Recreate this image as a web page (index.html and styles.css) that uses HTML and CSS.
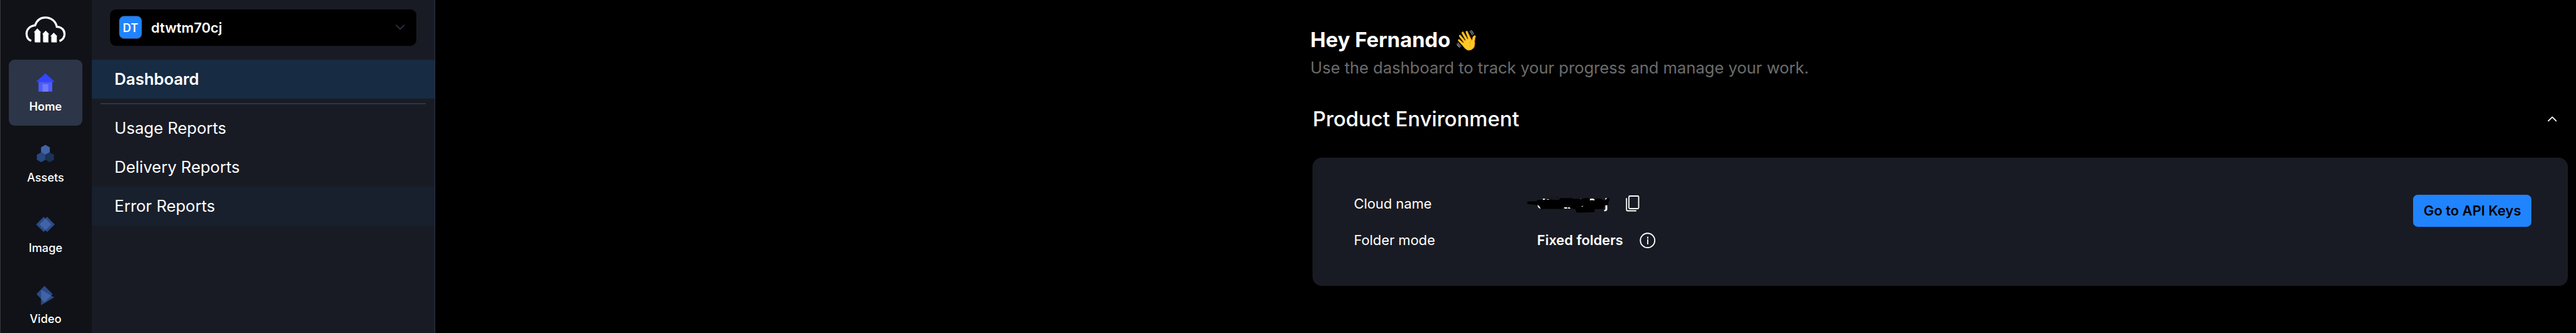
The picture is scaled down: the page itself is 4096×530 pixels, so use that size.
FILE: index.html
```
<!DOCTYPE html>
<html lang="en">
<head>
<meta charset="utf-8">
<title>Dashboard</title>
<link rel="stylesheet" href="styles.css">
</head>
<body>
<div class="app">
  <nav class="rail">
    <svg class="logo" viewBox="0 0 240 180">
      <path d="M45 155C29 149 20.500 135 20.500 118C20.500 94 39 76 65 74C74 48 94 32.500 119 32.500C148 32.500 173 51 179 81C203 81 219.500 98 219.500 119C219.500 136 211 149 193 156" fill="none" stroke="#fff" stroke-width="11"/>
      <path d="M77 90L97 110H93V163H68Q63 163 63 158V110H58ZM121 101L140 120H135V163H112Q107 163 107 158V120H102ZM163 112L182 131H179V163H155Q150 163 150 158V131H145Z" fill="#fff"/>
    </svg>
    <a class="rail-item rail-item--active">
      <svg viewBox="0 0 120 120"><path fill="#4e5bff" d="M24 57h72v51H24z"/><path fill="#3346ff" d="M10 57 60 12l49 45z"/><path fill="#717bff" d="M45 69h30v39H45z"/></svg>
      <span>Home</span>
    </a>
    <a class="rail-item">
      <svg viewBox="0 0 120 120"><path fill="#4163a8" d="m60 15 23 13v26L60 67 37 54V28z"/><path fill="#284780" d="m38 54 22 13v26l-22 13-23-13V67z"/><path fill="#1b3155" d="m82 54 23 13v26l-23 13-22-13V67z"/></svg>
      <span>Assets</span>
    </a>
    <a class="rail-item">
      <svg viewBox="0 0 120 120"><path fill="#2c4a85" d="m11 60 40-40 40 40-40 40z"/><path fill="#2c4a85" d="m29 60 40-40 40 40-40 40z"/><path fill="#4163a8" d="m29 60 31-31 31 31-31 31z"/></svg>
      <span>Image</span>
    </a>
    <a class="rail-item">
      <svg viewBox="0 0 120 120"><clipPath id="play"><path d="m37 30 69 40-69 41z"/></clipPath><path fill="#2c4a85" d="m13 53 42-43 43 43-43 43z"/><path fill="#2c4a85" d="m37 30 69 40-69 41z"/><path fill="#4163a8" clip-path="url(#play)" d="m13 53 42-43 43 43-43 43z"/></svg>
      <span>Video</span>
    </a>
  </nav>
  <aside class="side">
    <div class="picker">
      <span class="badge">DT</span>
      <span class="picker-name">dtwtm70cj</span>
      <svg class="chevron chevron--dim" viewBox="0 0 16 10"><path d="m1.200 1.200 6.800 6.800 6.800-6.800"/></svg>
    </div>
    <a class="side-link side-link--active">Dashboard</a>
    <hr class="rule">
    <a class="side-link">Usage Reports</a>
    <a class="side-link">Delivery Reports</a>
    <a class="side-link side-link--hover">Error Reports</a>
  </aside>
  <main class="main">
    <h1 class="hello">Hey Fernando<span class="wave">👋</span></h1>
    <p class="intro">Use the dashboard to track your progress and manage your work.</p>
    <section class="env">
      <header class="env-head">
        <h2>Product Environment</h2>
        <svg class="chevron" viewBox="0 0 16 10"><path d="m1.200 8.200 6.800-6.800 6.800 6.800"/></svg>
      </header>
      <div class="card">
        <dl class="facts">
          <div class="fact">
            <dt>Cloud name</dt>
            <dd>
              <span class="masked">dtwtm70cj
                <svg class="scribble" viewBox="0 0 480 135">
                  <path d="M24 51H68L76 43H186L196 34H255L262 38H298L330 33L349 36V45H375V36L405 38L427 48L434 41L438 34H448Q454 38 452 46L446 54V70L436 72H426L421 90L372 92Q378 100 370 108L284 110Q270 104 276 94L258 88L240 82H214L206 91H98Q88 90 87 80L78 71L24 65Q16 58 24 51Z"/>
                  <path d="M296 70h26v20h-26zM130 34h3v3h-3zM138 38h3v3h-3zM148 28h3v3h-3zM150 20h2v2h-2zM156 36h4v4h-4zM160 26h3v3h-3zM166 19h2v2h-2zM172 32h4v4h-4zM178 26h3v3h-3zM186 32h3v3h-3zM192 26h2v2h-2zM145 36h4v4h-4zM248 88h3v3h-3zM256 90h3v3h-3z"/>
                  <path class="fleck" d="M304 78q4-4 12-3l-6 4zM216 82h14v5h-14zM234 84h10v3h-10z"/>
                </svg>
              </span>
              <svg class="copy" viewBox="0 0 24 30"><rect x="5.600" y="2.200" width="17" height="22" rx="1.600"/><path d="M1.400 6.400V26.400Q1.400 28 3 28H17.800"/></svg>
            </dd>
          </div>
          <div class="fact">
            <dt>Folder mode</dt>
            <dd>Fixed folders
              <svg class="info" viewBox="0 0 28 28"><circle cx="14" cy="14" r="12.600"/><path d="M14.300 12.600V20M14.300 8.100V10"/></svg>
            </dd>
          </div>
        </dl>
        <a class="button">Go to API Keys</a>
      </div>
    </section>
  </main>
</div>
</body>
</html>
```
FILE: styles.css
```
/* 1rem is ten design pixels; the layout is 449.8rem wide. */
html { font-size: calc(100vw / 449.8); }
* { box-sizing: border-box; }
body { margin: 0; background: #000; color: #fff; font-family: Inter, "Liberation Sans", sans-serif; overflow: hidden; }
svg { display: block; flex: none; }
h1, h2, p, dl, dd { margin: 0; }

.app { display: flex; height: 100vh; overflow: hidden; }

.rail { flex: none; width: 16rem; padding: 2rem 1.6rem 0 1.4rem; border-left: .2rem solid #37383c; background: #101217; display: flex; flex-direction: column; align-items: center; }
.logo { width: 8rem; height: 6rem; margin-bottom: 2.4rem; }
.rail-item { flex: none; width: 12.8rem; height: 11.6rem; margin-bottom: .8rem; padding-top: 2rem; border-radius: 1rem; display: flex; flex-direction: column; align-items: center; gap: 1.03rem; font-size: 2rem; line-height: 2.4rem; font-weight: 500; }
.rail-item svg { width: 4rem; height: 4rem; }
.rail-item--active { background: #2d3548; font-weight: 600; }

.side { flex: none; width: 60rem; padding-top: 1.6rem; border-right: .2rem solid #2d3548; background: #191b24; }
.picker { display: flex; align-items: center; height: 6.4rem; margin: 0 3.2rem 2.4rem; padding: 0 2rem 0 1.6rem; border-radius: 1rem; background: #000; }
.badge { width: 4rem; height: 4rem; border: .2rem solid #2d3548; border-radius: .9rem; background: #2084ff; display: flex; align-items: center; justify-content: center; font-size: 2rem; font-weight: 600; }
.picker-name { margin-left: 1.6rem; font-size: 2.4rem; font-weight: 600; }
.chevron { width: 1.6rem; height: 1rem; margin-left: auto; fill: none; stroke: #fff; stroke-width: 2; stroke-linecap: round; stroke-linejoin: round; }
.chevron--dim { stroke: #2d3548; }
.side-link { display: block; height: 6.8rem; padding-left: 4rem; font-size: 2.8rem; line-height: 6.8rem; }
.side-link--active { background: #172b42; font-weight: 600; }
.side-link--hover { background: #18202d; }
.rule { height: .2rem; margin: .8rem 1.6rem; border: 0; background: #2d3548; }

.main { flex: 1; padding: 4.62rem 1.4rem 0 152.8rem; }
.hello { display: flex; font-size: 3.6rem; line-height: 4.8rem; font-weight: 700; }
.wave { margin-left: .7rem; font-size: 3.4rem; font-weight: 400; }
.intro { margin-top: .42rem; font-size: 2.8rem; line-height: 4rem; color: #6c6c6c; }
.env { margin: 4.56rem 0 0 .4rem; }
.env-head { display: flex; align-items: center; height: 4.8rem; padding: 0 2rem 0 0; }
.env-head h2 { font-size: 3.6rem; line-height: 4.8rem; font-weight: 500; }
.card { display: flex; justify-content: space-between; align-items: flex-start; height: 22.4rem; margin-top: 4.4rem; padding: 6rem 6.4rem 0 7.2rem; border-radius: 1.6rem; background: #191b24; }
.facts { display: grid; row-gap: 2.4rem; font-size: 2.4rem; line-height: 4rem; }
.fact { display: grid; grid-template-columns: 32rem auto; }
.fact dd { display: flex; align-items: center; font-weight: 600; }
.masked { position: relative; }
.scribble { position: absolute; left: -2.4rem; top: -.1rem; width: 16rem; height: 4.5rem; fill: #000; }
.fleck { fill: #fff; }
.copy, .info { fill: none; stroke: #fff; stroke-width: 2; stroke-linecap: round; }
.copy { width: 2.4rem; height: 3rem; margin-left: 3.1rem; }
.info { width: 2.8rem; height: 2.8rem; margin-left: 2.9rem; }
.button { height: 5.6rem; width: 20.6rem; margin-top: .4rem; border-radius: .8rem; background: #2084ff; color: #000; font-size: 2.4rem; line-height: 5.6rem; font-weight: 600; text-align: center; }
```
